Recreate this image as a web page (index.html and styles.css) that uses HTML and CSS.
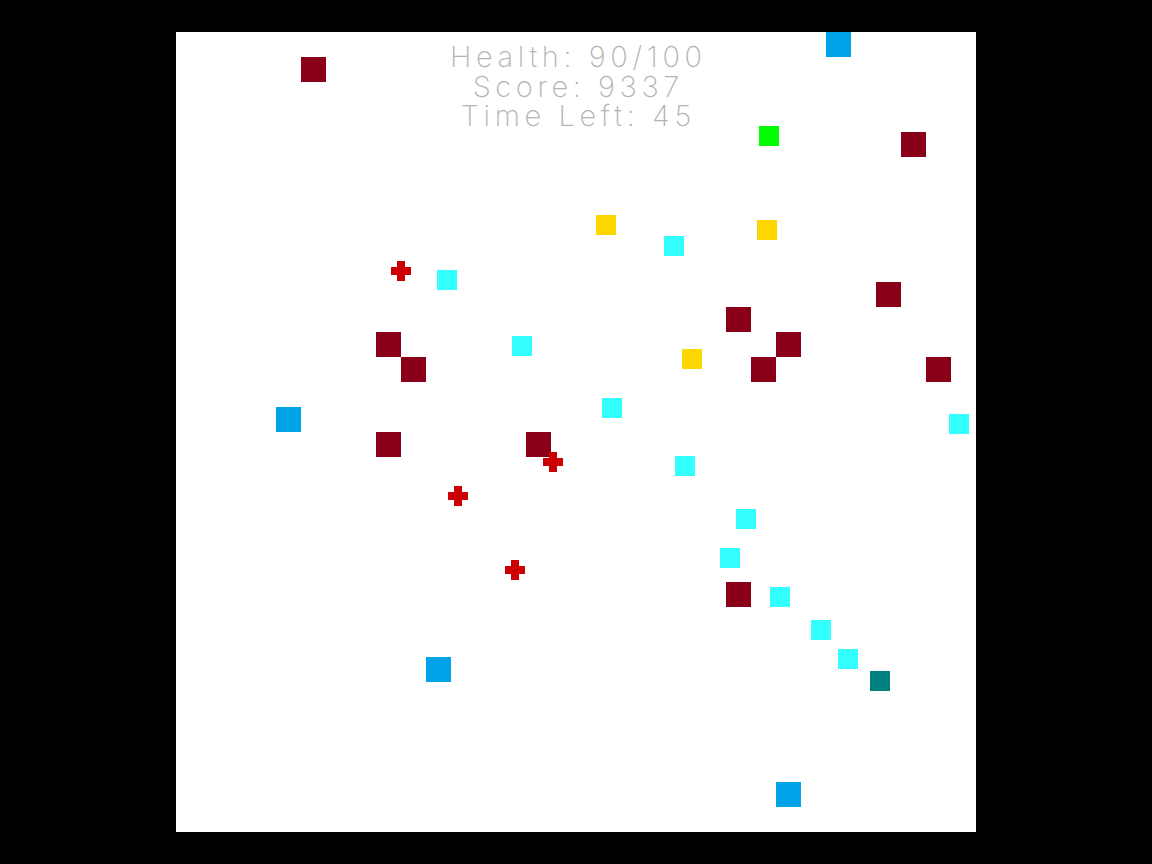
FILE: index.html
```html
<!DOCTYPE html>
<html lang="en">
<head>
<meta charset="utf-8">
<title>Game</title>
<link rel="stylesheet" href="styles.css">
</head>
<body>
<main class="stage">
  <div class="canvas">
    <div class="hud">
      <div class="hud-line">Health: 90/100</div>
      <div class="hud-line">Score: 9337</div>
      <div class="hud-line">Time Left: 45</div>
    </div>

    <div class="enemy" style="left:125px;top:25px"></div>
    <div class="enemy" style="left:725px;top:100px"></div>
    <div class="enemy" style="left:700px;top:250px"></div>
    <div class="enemy" style="left:550px;top:275px"></div>
    <div class="enemy" style="left:200px;top:300px"></div>
    <div class="enemy" style="left:600px;top:300px"></div>
    <div class="enemy" style="left:225px;top:325px"></div>
    <div class="enemy" style="left:575px;top:325px"></div>
    <div class="enemy" style="left:750px;top:325px"></div>
    <div class="enemy" style="left:200px;top:400px"></div>
    <div class="enemy" style="left:350px;top:400px"></div>
    <div class="enemy" style="left:550px;top:550px"></div>

    <div class="portal" style="left:650px;top:0px"></div>
    <div class="portal" style="left:100px;top:375px"></div>
    <div class="portal" style="left:250px;top:625px"></div>
    <div class="portal" style="left:600px;top:750px"></div>

    <div class="coin" style="left:420px;top:183px"></div>
    <div class="coin" style="left:581px;top:188px"></div>
    <div class="coin" style="left:506px;top:317px"></div>

    <div class="gem" style="left:488px;top:204px"></div>
    <div class="gem" style="left:261px;top:238px"></div>
    <div class="gem" style="left:336px;top:304px"></div>
    <div class="gem" style="left:426px;top:366px"></div>
    <div class="gem" style="left:773px;top:382px"></div>
    <div class="gem" style="left:499px;top:424px"></div>
    <div class="gem" style="left:560px;top:477px"></div>
    <div class="gem" style="left:544px;top:516px"></div>
    <div class="gem" style="left:594px;top:555px"></div>
    <div class="gem" style="left:635px;top:588px"></div>
    <div class="gem" style="left:662px;top:617px"></div>

    <div class="player" style="left:583px;top:94px"></div>
    <div class="buddy" style="left:694px;top:639px"></div>

    <div class="medkit" style="left:215px;top:229px"></div>
    <div class="medkit" style="left:367px;top:420px"></div>
    <div class="medkit" style="left:272px;top:454px"></div>
    <div class="medkit" style="left:329px;top:528px"></div>
  </div>
</main>
</body>
</html>
```
FILE: styles.css
```css
html, body {
  margin: 0;
  padding: 0;
  background: #000;
}

.stage {
  width: 1152px;
  height: 864px;
  display: flex;
  align-items: center;
  justify-content: center;
}

.canvas {
  position: relative;
  width: 800px;
  height: 800px;
  background: #fff;
  overflow: hidden;
}

.hud {
  position: relative;
  z-index: 2;
  padding-top: 10px;
  display: flex;
  flex-direction: column;
  align-items: center;
  font-family: "Inter", "DejaVu Sans", sans-serif;
  font-weight: 200;
  font-size: 29px;
  line-height: 29.5px;
  letter-spacing: 4.6px;
  color: #b4b4b4;
}

.hud-line {
  white-space: nowrap;
  padding-left: 4.6px;
}

.enemy,
.portal,
.coin,
.gem,
.player,
.buddy,
.medkit {
  position: absolute;
}

.enemy {
  width: 25px;
  height: 25px;
  background: #8a0019;
}

.portal {
  width: 25px;
  height: 25px;
  background: #00a2e8;
}

.coin {
  width: 20px;
  height: 20px;
  background: #ffd700;
}

.gem {
  width: 20px;
  height: 20px;
  background: #33ffff;
}

.player {
  width: 20px;
  height: 20px;
  background: #00ff00;
}

.buddy {
  width: 20px;
  height: 20px;
  background: #008080;
}

.medkit {
  width: 20px;
  height: 20px;
}

.medkit::before,
.medkit::after {
  content: "";
  position: absolute;
  background: #cc0000;
}

.medkit::before {
  left: 6px;
  top: 0;
  width: 8px;
  height: 20px;
}

.medkit::after {
  left: 0;
  top: 6px;
  width: 20px;
  height: 8px;
}
```
